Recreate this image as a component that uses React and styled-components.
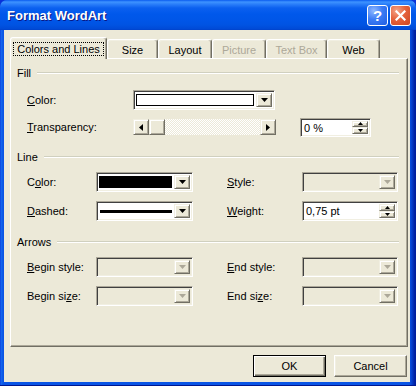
import React from 'react';
import styled, { createGlobalStyle, css } from 'styled-components';

const Global = createGlobalStyle`
  html, body { margin: 0; padding: 0; background: #0831D9; }
  body { width: 416px; height: 386px; overflow: hidden; }
  * { box-sizing: border-box; }
`;

const FONT = `Tahoma, "Liberation Sans", Arial, sans-serif`;

const Window = styled.div`
  width: 416px;
  height: 386px;
  display: flex;
  flex-direction: column;
  background: linear-gradient(to right, #0831D9 0, #166AEE 1px, #0A55E5 3px, #0A55E5 409px, #0847D6 411px, #001EA0 415px);
  box-shadow: inset 0 -1px 0 #001890;
  border-radius: 7px 7px 0 0;
  font-family: ${FONT};
  font-size: 11px;
  color: #000;
`;

const TitleBar = styled.div`
  height: 30px;
  flex: none;
  display: flex;
  align-items: center;
  padding: 0 5px 0 7px;
  border-radius: 7px 7px 0 0;
  background: linear-gradient(to bottom, #0A5CEF 0px, #3E93FF 2px, #2C80FA 4px, #0B60EF 8px, #0058EB 14px, #0056E8 20px, #0053E2 25px, #004AD6 29px, #0040C8 30px);
`;

const Title = styled.div`
  flex: 1;
  color: #fff;
  font: bold 13px "Liberation Sans", Arial, sans-serif;
  text-shadow: 1px 1px 0 #0A1883;
  padding-top: 1px;
`;

const CaptionButton = styled.div`
  width: 21px;
  height: 21px;
  border-radius: 3px;
  border: 1px solid #fff;
  display: flex;
  align-items: center;
  justify-content: center;
  color: #fff;
  font: bold 15px "Liberation Sans", Arial, sans-serif;
  ${(p) =>
    p.$close
      ? css`background: radial-gradient(circle at 30% 25%, #F4A488 0%, #E5623C 45%, #CC4520 100%);`
      : css`background: radial-gradient(circle at 30% 25%, #8FB8FF 0%, #3C7CF5 45%, #1F5DE2 100%);`}
  & + & { margin-left: 2px; }
`;

const Body = styled.div`
  flex: 1;
  margin: 0 6px 4px 4px;
  background: #ECE9D8;
  display: flex;
  flex-direction: column;
  padding: 7px 2px 5px 6px;
`;

const TabRow = styled.div`
  display: flex;
  align-items: flex-end;
  height: 21px;
  flex: none;
`;

const Tab = styled.div`
  position: relative;
  width: ${(p) => p.$w}px;
  height: ${(p) => (p.$active ? 22 : 19)}px;
  margin-bottom: ${(p) => (p.$active ? -1 : 0)}px;
  z-index: ${(p) => (p.$active ? 1 : 0)};
  background: #ECE9D8;
  border-top: 1px solid #fff;
  border-left: 1px solid #fff;
  border-right: 1px solid #716F64;
  box-shadow: inset -1px 0 0 #ACA899, inset 1px 1px 0 #F1EFE2;
  border-radius: 3px 3px 0 0;
  display: flex;
  align-items: center;
  justify-content: center;
  padding-top: ${(p) => (p.$active ? 0 : 1)}px;
  color: ${(p) => (p.$disabled ? '#ACA899' : '#000')};
`;

const FocusLabel = styled.span`
  border: 1px dotted #000;
  padding: 0 3px;
  line-height: 12px;
`;

const Panel = styled.div`
  height: 289px;
  flex: none;
  border-top: 1px solid #fff;
  border-left: 1px solid #fff;
  border-right: 1px solid #716F64;
  border-bottom: 1px solid #716F64;
  box-shadow: inset -1px -1px 0 #ACA899;
  padding: 7px 8px 0 6px;
`;

const Section = styled.div`
  margin-top: ${(p) => p.$top || 0}px;
`;

const GroupHeader = styled.div`
  height: 14px;
  display: flex;
  align-items: center;
  gap: 6px;
`;

const Rule = styled.div`
  flex: 1;
  height: 2px;
  border-top: 1px solid #D0D0BF;
  border-bottom: 1px solid #fff;
`;

const Rows = styled.div`
  margin: ${(p) => p.$top}px 0 0 10px;
  display: flex;
  flex-direction: column;
  gap: ${(p) => p.$gap}px;
`;

const Row = styled.div`
  display: flex;
  align-items: center;
  height: ${(p) => p.$h || 20}px;
`;

const Label = styled.div`
  width: ${(p) => p.$w}px;
  margin-left: ${(p) => p.$gap || 0}px;
  flex: none;
  white-space: nowrap;
`;

const Field = styled.div`
  width: ${(p) => p.$w}px;
  height: ${(p) => p.$h || 20}px;
  margin-left: ${(p) => p.$gap || 0}px;
  flex: none;
  display: flex;
  align-items: stretch;
  padding: 2px;
  border: 1px solid;
  border-color: #ACA899 #fff #fff #ACA899;
  box-shadow: inset 1px 1px 0 #404040, inset -1px -1px 0 #F1EFE2;
  background: ${(p) => (p.$disabled ? '#ECE9D8' : '#fff')};
`;

const Swatch = styled.div`
  flex: 1;
  margin: 1px 2px 1px 0;
  border: 1px solid #000;
  background: ${(p) => p.$color};
`;

const DashPreview = styled.div`
  flex: 1;
  display: flex;
  align-items: center;
  padding: 0 2px 0 1px;
  &::after {
    content: '';
    flex: 1;
    height: 3px;
    background: #000;
  }
`;

const raised = css`
  background: #ECE9D8;
  border: 1px solid;
  border-color: #F1EFE2 #716F64 #716F64 #F1EFE2;
  box-shadow: inset 1px 1px 0 #fff, inset -1px -1px 0 #ACA899;
  display: flex;
  align-items: center;
  justify-content: center;
`;

const DropButton = styled.div`
  ${raised}
  width: 16px;
  flex: none;
  margin-left: auto;
`;

const SpinText = styled.div`
  flex: 1;
  padding-left: 1px;
  line-height: 14px;
  white-space: nowrap;
`;

const SpinButtons = styled.div`
  width: 16px;
  flex: none;
  display: flex;
  flex-direction: column;
`;

const SpinHalf = styled.div`
  ${raised}
  flex: 1;
`;

const ScrollBar = styled.div`
  width: 143px;
  height: 16px;
  flex: none;
  display: flex;
  background-color: #fff;
  background-image: conic-gradient(#ECE9D8 25%, transparent 0 50%, #ECE9D8 0 75%, transparent 0);
  background-size: 2px 2px;
`;

const ScrollButton = styled.div`
  ${raised}
  width: 16px;
  height: 16px;
  flex: none;
  margin-left: ${(p) => (p.$end ? 'auto' : '0')};
`;

const Footer = styled.div`
  display: flex;
  justify-content: flex-end;
  gap: 8px;
  margin-top: 8px;
  padding-right: 1px;
`;

const Button = styled.button`
  width: 73px;
  height: 22px;
  padding: 0;
  font-family: ${FONT};
  font-size: 11px;
  color: #000;
  background: #ECE9D8;
  border: 1px solid;
  border-color: #fff #716F64 #716F64 #fff;
  box-shadow: inset -1px -1px 0 #ACA899, inset 1px 1px 0 #F1EFE2;
  ${(p) =>
    p.$default &&
    css`
      border-color: #000;
      box-shadow: inset 1px 1px 0 #fff, inset -1px -1px 0 #716F64, inset -2px -2px 0 #ACA899;
    `}
`;

const Arrow = ({ dir = 'down', disabled, small }) => {
  const c = disabled ? '#ACA899' : '#000';
  if (dir === 'down' || dir === 'up') {
    const w = small ? 5 : 7;
    const h = small ? 3 : 4;
    const pts = dir === 'down' ? `0,0 ${w},0 ${w / 2},${h}` : `0,${h} ${w},${h} ${w / 2},0`;
    return (
      <svg width={w} height={h} viewBox={`0 0 ${w} ${h}`} style={{ display: 'block' }}>
        <polygon points={pts} fill={c} />
      </svg>
    );
  }
  const pts = dir === 'left' ? '4,0 4,7 0,3.5' : '0,0 0,7 4,3.5';
  return (
    <svg width="4" height="7" viewBox="0 0 4 7" style={{ display: 'block' }}>
      <polygon points={pts} fill={c} />
    </svg>
  );
};

const Combo = ({ w, gap, disabled, children }) => (
  <Field $w={w} $gap={gap} $disabled={disabled}>
    {children}
    <DropButton>
      <Arrow dir="down" disabled={disabled} />
    </DropButton>
  </Field>
);

const Spin = ({ w, h, gap, value }) => (
  <Field $w={w} $h={h} $gap={gap}>
    <SpinText>{value}</SpinText>
    <SpinButtons>
      <SpinHalf>
        <Arrow dir="up" small />
      </SpinHalf>
      <SpinHalf>
        <Arrow dir="down" small />
      </SpinHalf>
    </SpinButtons>
  </Field>
);

const tabs = [
  { label: 'Colors and Lines', w: 97, active: true },
  { label: 'Size', w: 51 },
  { label: 'Layout', w: 54 },
  { label: 'Picture', w: 54, disabled: true },
  { label: 'Text Box', w: 61, disabled: true },
  { label: 'Web', w: 53 },
];

export default function App() {
  return (
    <>
      <Global />
      <Window>
        <TitleBar>
          <Title>Format WordArt</Title>
          <CaptionButton>?</CaptionButton>
          <CaptionButton $close>
            <svg width="11" height="11" viewBox="0 0 11 11">
              <path d="M1.5 1.5 L9.5 9.5 M9.5 1.5 L1.5 9.5" stroke="#fff" strokeWidth="2.2" strokeLinecap="square" />
            </svg>
          </CaptionButton>
        </TitleBar>
        <Body>
          <TabRow>
            {tabs.map((t) => (
              <Tab key={t.label} $w={t.w} $active={t.active} $disabled={t.disabled}>
                {t.active ? <FocusLabel>{t.label}</FocusLabel> : t.label}
              </Tab>
            ))}
          </TabRow>
          <Panel>
            <Section>
              <GroupHeader>
                <span>Fill</span>
                <Rule />
              </GroupHeader>
              <Rows $top={9} $gap={7}>
                <Row $h={21}>
                  <Label $w={106}>
                    <u>C</u>olor:
                  </Label>
                  <Combo w={142}>
                    <Swatch $color="#fff" />
                  </Combo>
                </Row>
                <Row $h={20}>
                  <Label $w={106}>
                    <u>T</u>ransparency:
                  </Label>
                  <ScrollBar>
                    <ScrollButton>
                      <Arrow dir="left" />
                    </ScrollButton>
                    <ScrollButton />
                    <ScrollButton $end>
                      <Arrow dir="right" />
                    </ScrollButton>
                  </ScrollBar>
                  <Spin w={71} h={19} gap={24} value="0 %" />
                </Row>
              </Rows>
            </Section>

            <Section $top={13}>
              <GroupHeader>
                <span>Line</span>
                <Rule />
              </GroupHeader>
              <Rows $top={8} $gap={9}>
                <Row>
                  <Label $w={69}>
                    C<u>o</u>lor:
                  </Label>
                  <Combo w={97}>
                    <Swatch $color="#000" />
                  </Combo>
                  <Label $w={75} $gap={34}>
                    <u>S</u>tyle:
                  </Label>
                  <Combo w={96} disabled />
                </Row>
                <Row>
                  <Label $w={69}>
                    <u>D</u>ashed:
                  </Label>
                  <Combo w={97}>
                    <DashPreview />
                  </Combo>
                  <Label $w={75} $gap={34}>
                    <u>W</u>eight:
                  </Label>
                  <Spin w={96} h={20} value="0,75 pt" />
                </Row>
              </Rows>
            </Section>

            <Section $top={14}>
              <GroupHeader>
                <span>Arrows</span>
                <Rule />
              </GroupHeader>
              <Rows $top={8} $gap={9}>
                <Row>
                  <Label $w={69}>
                    <u>B</u>egin style:
                  </Label>
                  <Combo w={97} disabled />
                  <Label $w={75} $gap={34}>
                    <u>E</u>nd style:
                  </Label>
                  <Combo w={96} disabled />
                </Row>
                <Row>
                  <Label $w={69}>
                    Begin si<u>z</u>e:
                  </Label>
                  <Combo w={97} disabled />
                  <Label $w={75} $gap={34}>
                    End si<u>z</u>e:
                  </Label>
                  <Combo w={96} disabled />
                </Row>
              </Rows>
            </Section>
          </Panel>
          <Footer>
            <Button $default>OK</Button>
            <Button>Cancel</Button>
          </Footer>
        </Body>
      </Window>
    </>
  );
}
